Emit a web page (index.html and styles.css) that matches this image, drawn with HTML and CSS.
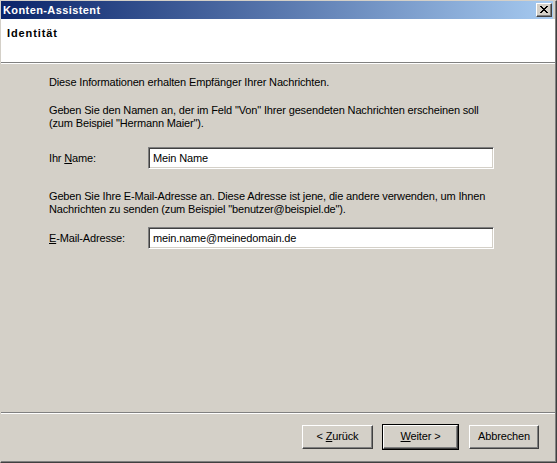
FILE: index.html
```html
<!DOCTYPE html>
<html lang="de">
<head>
<meta charset="utf-8">
<title>Konten-Assistent</title>
<link rel="stylesheet" href="styles.css">
</head>
<body>
<div class="window">
  <div class="titlebar">
    <span class="title">Konten-Assistent</span>
    <button class="close" type="button" aria-label="Schließen">
      <svg width="8" height="7" viewBox="0 0 8 7" shape-rendering="crispEdges">
        <path d="M0 0h2v1h-2z M6 0h2v1h-2z M1 1h2v1h-2z M5 1h2v1h-2z M2 2h4v1h-4z M3 3h2v1h-2z M2 4h4v1h-4z M1 5h2v1h-2z M5 5h2v1h-2z M0 6h2v1h-2z M6 6h2v1h-2z" fill="#000"/>
      </svg>
    </button>
  </div>
  <div class="header">
    <div class="heading">Identität</div>
  </div>
  <div class="sep"></div>
  <div class="content">
    <p class="p1">Diese Informationen erhalten Empfänger Ihrer Nachrichten.</p>
    <p class="p2">Geben Sie den Namen an, der im Feld "Von" Ihrer gesendeten Nachrichten erscheinen soll<br>(zum Beispiel "Hermann Maier").</p>
    <div class="row row1">
      <label class="lbl">Ihr <u>N</u>ame:</label>
      <div class="input">Mein Name</div>
    </div>
    <p class="p3">Geben Sie Ihre E-Mail-Adresse an. Diese Adresse ist jene, die andere verwenden, um Ihnen<br>Nachrichten zu senden (zum Beispiel "benutzer@beispiel.de").</p>
    <div class="row row2">
      <label class="lbl"><u>E</u>-Mail-Adresse:</label>
      <div class="input">mein.name@meinedomain.de</div>
    </div>
  </div>
  <div class="sep"></div>
  <div class="buttons">
    <div class="btn btn-back"><span>&lt; <u>Z</u>urück</span></div>
    <div class="btn-default"><div class="btn btn-next"><span><u>W</u>eiter &gt;</span></div></div>
    <div class="btn btn-cancel"><span>Abbrechen</span></div>
  </div>
</div>
</body>
</html>
```
FILE: styles.css
```css
* { box-sizing: border-box; }
html, body {
  margin: 0;
  padding: 0;
  background: #d4d0c8;
}
body {
  font-family: "Liberation Sans", Arial, sans-serif;
  font-size: 11px;
  line-height: 13px;
  letter-spacing: -0.15px;
  color: #000;
}
.window {
  width: 557px;
  height: 463px;
  display: flex;
  flex-direction: column;
  background: #d4d0c8;
  border-style: solid;
  border-width: 1px;
  border-color: #d4d0c8 #404040 #404040 #d4d0c8;
  box-shadow: inset -1px -1px 0 #808080;
  padding: 0 1px 1px 0;
}
.titlebar {
  height: 18px;
  margin-right: 2px;
  flex: none;
  display: flex;
  align-items: center;
  justify-content: space-between;
  background: linear-gradient(to right, #0a246a 0%, #a6caf0 100%);
  padding: 0 1px 0 2px;
}
.title {
  color: #fff;
  font-weight: bold;
  line-height: 18px;
  letter-spacing: 0.4px;
}
.close {
  width: 16px;
  height: 14px;
  padding: 0;
  margin: 0;
  background: #d4d0c8;
  border-style: solid;
  border-width: 1px;
  border-color: #fff #404040 #404040 #fff;
  box-shadow: inset -1px -1px 0 #808080;
  display: flex;
  align-items: flex-start;
  justify-content: flex-start;
}
.close svg {
  display: block;
  margin: 2px 0 0 3px;
}
.header {
  height: 43px;
  flex: none;
  background: #fff;
  padding: 8px 6px;
}
.heading {
  font-weight: bold;
  letter-spacing: 0.9px;
}
.sep {
  height: 2px;
  flex: none;
  border-top: 1px solid #808080;
  border-bottom: 1px solid #fff;
}
.content {
  flex: 1;
  padding: 12px 0 0 48px;
}
.content p {
  margin: 0;
  white-space: nowrap;
}
.p2 { margin-top: 15px !important; }
.p3 { margin-top: 21px !important; }
.row {
  display: flex;
  align-items: center;
}
.row1 { margin-top: 17px; }
.row2 { margin-top: 11px; }
.lbl {
  width: 99px;
  flex: none;
}
.input {
  width: 346px;
  height: 22px;
  background: #fff;
  border-style: solid;
  border-width: 1px;
  border-color: #808080 #fff #fff #808080;
  box-shadow: inset 1px 1px 0 #404040, inset -1px -1px 0 #d4d0c8;
  padding: 4px 4px 0 4px;
  white-space: nowrap;
}
.buttons {
  height: 47px;
  flex: none;
  display: flex;
  justify-content: flex-end;
  align-items: flex-start;
  padding: 11px 16px 0 0;
}
.btn {
  height: 24px;
  background: #d4d0c8;
  border-style: solid;
  border-width: 1px;
  border-color: #fff #404040 #404040 #fff;
  box-shadow: inset -1px -1px 0 #808080;
  display: flex;
  align-items: center;
  justify-content: center;
  padding-bottom: 1px;
  white-space: nowrap;
}
.btn-back { width: 71px; }
.btn-default {
  margin-left: 9px;
  border: 1px solid #000;
  margin-top: -1px;
}
.btn-next { width: 75px; }
.btn-cancel { width: 70px; margin-left: 10px; }
```
